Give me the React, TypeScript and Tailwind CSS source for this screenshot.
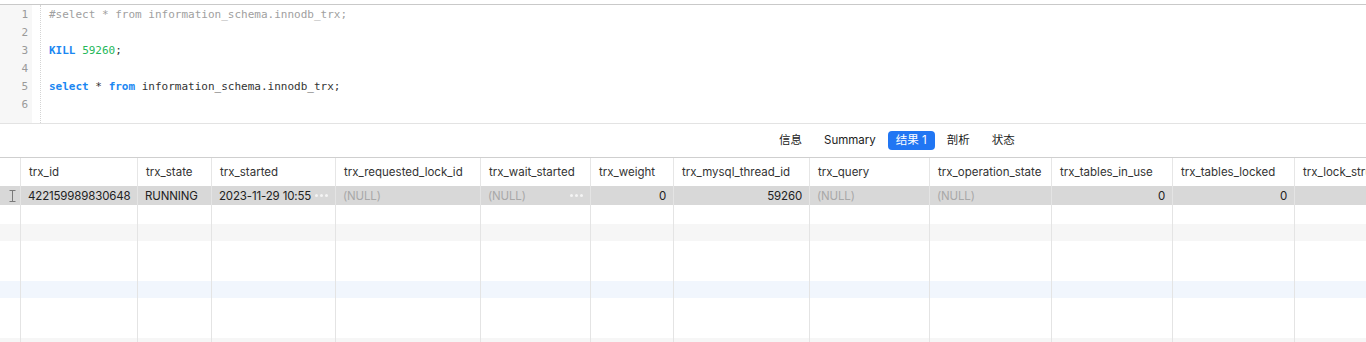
import React from 'react';

const cols = [
  { name: '', w: 21 },
  { name: 'trx_id', w: 117 },
  { name: 'trx_state', w: 74 },
  { name: 'trx_started', w: 124 },
  { name: 'trx_requested_lock_id', w: 145 },
  { name: 'trx_wait_started', w: 110 },
  { name: 'trx_weight', w: 83 },
  { name: 'trx_mysql_thread_id', w: 136 },
  { name: 'trx_query', w: 120 },
  { name: 'trx_operation_state', w: 122 },
  { name: 'trx_tables_in_use', w: 121 },
  { name: 'trx_tables_locked', w: 122 },
  { name: 'trx_lock_structs', w: 140 },
];

type Cell = { text?: string; nul?: boolean; right?: boolean; dots?: boolean };

const dataRow: Cell[] = [
  {},
  { text: '422159989830648' },
  { text: 'RUNNING' },
  { text: '2023-11-29 10:55', dots: true },
  { text: '(NULL)', nul: true },
  { text: '(NULL)', nul: true, dots: true },
  { text: '0', right: true },
  { text: '59260', right: true },
  { text: '(NULL)', nul: true },
  { text: '(NULL)', nul: true },
  { text: '0', right: true },
  { text: '0', right: true },
  {},
];

const bands = [
  { h: 'h-[19px]', bg: 'bg-white' },
  { h: 'h-[17px]', bg: 'bg-[#f6f6f6]' },
  { h: 'h-[40px]', bg: 'bg-white' },
  { h: 'h-[17px]', bg: 'bg-[#f1f6fd]' },
  { h: 'h-[40px]', bg: 'bg-white' },
  { h: 'h-[10px]', bg: 'bg-[#f6f6f6]' },
];

function IBeam() {
  return (
    <svg width="7" height="12" viewBox="0 0 7 12" className="text-[#7a7a7a]">
      <path d="M0.5 0.5h6M0.5 11.5h6M3.5 0.5v11" stroke="currentColor" strokeWidth="1" fill="none" />
    </svg>
  );
}

function Code() {
  const lines: React.ReactNode[] = [
    <span className="text-[#a0a0a0]">#select * from information_schema.innodb_trx;</span>,
    '',
    <>
      <span className="text-[#1b87f2] font-bold">KILL</span> <span className="text-[#25b85a]">59260</span>;
    </>,
    '',
    <>
      <span className="text-[#1b87f2] font-bold">select</span> * <span className="text-[#1b87f2] font-bold">from</span> information_schema.innodb_trx;
    </>,
    '',
  ];
  return (
    <div className="flex h-[120px] border-t border-[#c9c9c9] border-b border-b-[#e3e3e3] font-['DejaVu_Sans_Mono',monospace] text-[11px]">
      <div className="w-[32px] bg-[#f7f7f7] pt-[1px] pr-[4px] text-right text-[#9a9a9a]">
        {lines.map((_, i) => (
          <div key={i} className="h-[18px] leading-[18px]">{i + 1}</div>
        ))}
      </div>
      <div className="ml-[8px] border-l border-dotted border-[#d4d4d4]" />
      <div className="pl-[8px] pt-[1px] text-[#333]">
        {lines.map((l, i) => (
          <div key={i} className="h-[18px] leading-[18px] whitespace-pre">{l}</div>
        ))}
      </div>
    </div>
  );
}

function Tabs() {
  const tabs = ['信息', 'Summary', '结果 1', '剖析', '状态'];
  return (
    <div className="flex h-[34px] items-center border-b border-[#cfcfcf] pl-[769px] gap-[2px] font-['Inter','Noto_Sans_CJK_SC',sans-serif] text-[11.5px] text-[#222]">
      {tabs.map((t) => (
        <div
          key={t}
          className={
            t === '结果 1'
              ? 'h-[19px] leading-[19px] px-[8px] rounded-[4px] bg-[#2176f3] text-white'
              : 'h-[19px] leading-[19px] px-[10px]'
          }
        >
          {t}
        </div>
      ))}
    </div>
  );
}

function Grid() {
  return (
    <div className="font-['Inter','Noto_Sans_CJK_SC',sans-serif] text-[11.5px] overflow-hidden">
      <div className="flex h-[28px] text-[#333]">
        {cols.map((c, i) => (
          <div
            key={i}
            style={{ width: c.w }}
            className="shrink-0 border-r border-[#e6e6e6] pl-[8px] leading-[29px] whitespace-nowrap overflow-hidden"
          >
            {c.name}
          </div>
        ))}
      </div>
      <div className="flex h-[19px] bg-[#d8d8d8] text-[#222] tracking-[-0.15px]">
        {cols.map((c, i) => {
          const d = dataRow[i];
          return (
            <div
              key={i}
              style={{ width: c.w }}
              className={
                'shrink-0 border-r border-[#e4e4e4] leading-[20px] whitespace-nowrap overflow-hidden relative ' +
                (d.right ? 'text-right pr-[7px]' : 'pl-[7px]')
              }
            >
              {i === 0 ? (
                <div className="flex h-full items-center justify-center pr-[2px]">
                  <IBeam />
                </div>
              ) : (
                <span className={d.nul ? 'text-[#a8a8a8]' : ''}>{d.text}</span>
              )}
              {d.dots && (
                <span className="absolute right-[6px] top-0 h-full w-[15px] flex items-center justify-center gap-[2px]">
                  <span className="w-[3px] h-[3px] rounded-full bg-[#f4f4f4]" />
                  <span className="w-[3px] h-[3px] rounded-full bg-[#f4f4f4]" />
                  <span className="w-[3px] h-[3px] rounded-full bg-[#f4f4f4]" />
                </span>
              )}
            </div>
          );
        })}
      </div>
      {bands.map((b, r) => (
        <div key={r} className={'flex ' + b.h + ' ' + b.bg}>
          {cols.map((c, i) => (
            <div key={i} style={{ width: c.w }} className="shrink-0 border-r border-[#e4e4e4]" />
          ))}
        </div>
      ))}
    </div>
  );
}

export default function App() {
  return (
    <div className="w-[1366px] h-[342px] overflow-hidden bg-white pt-[4px]">
      <Code />
      <Tabs />
      <Grid />
    </div>
  );
}
